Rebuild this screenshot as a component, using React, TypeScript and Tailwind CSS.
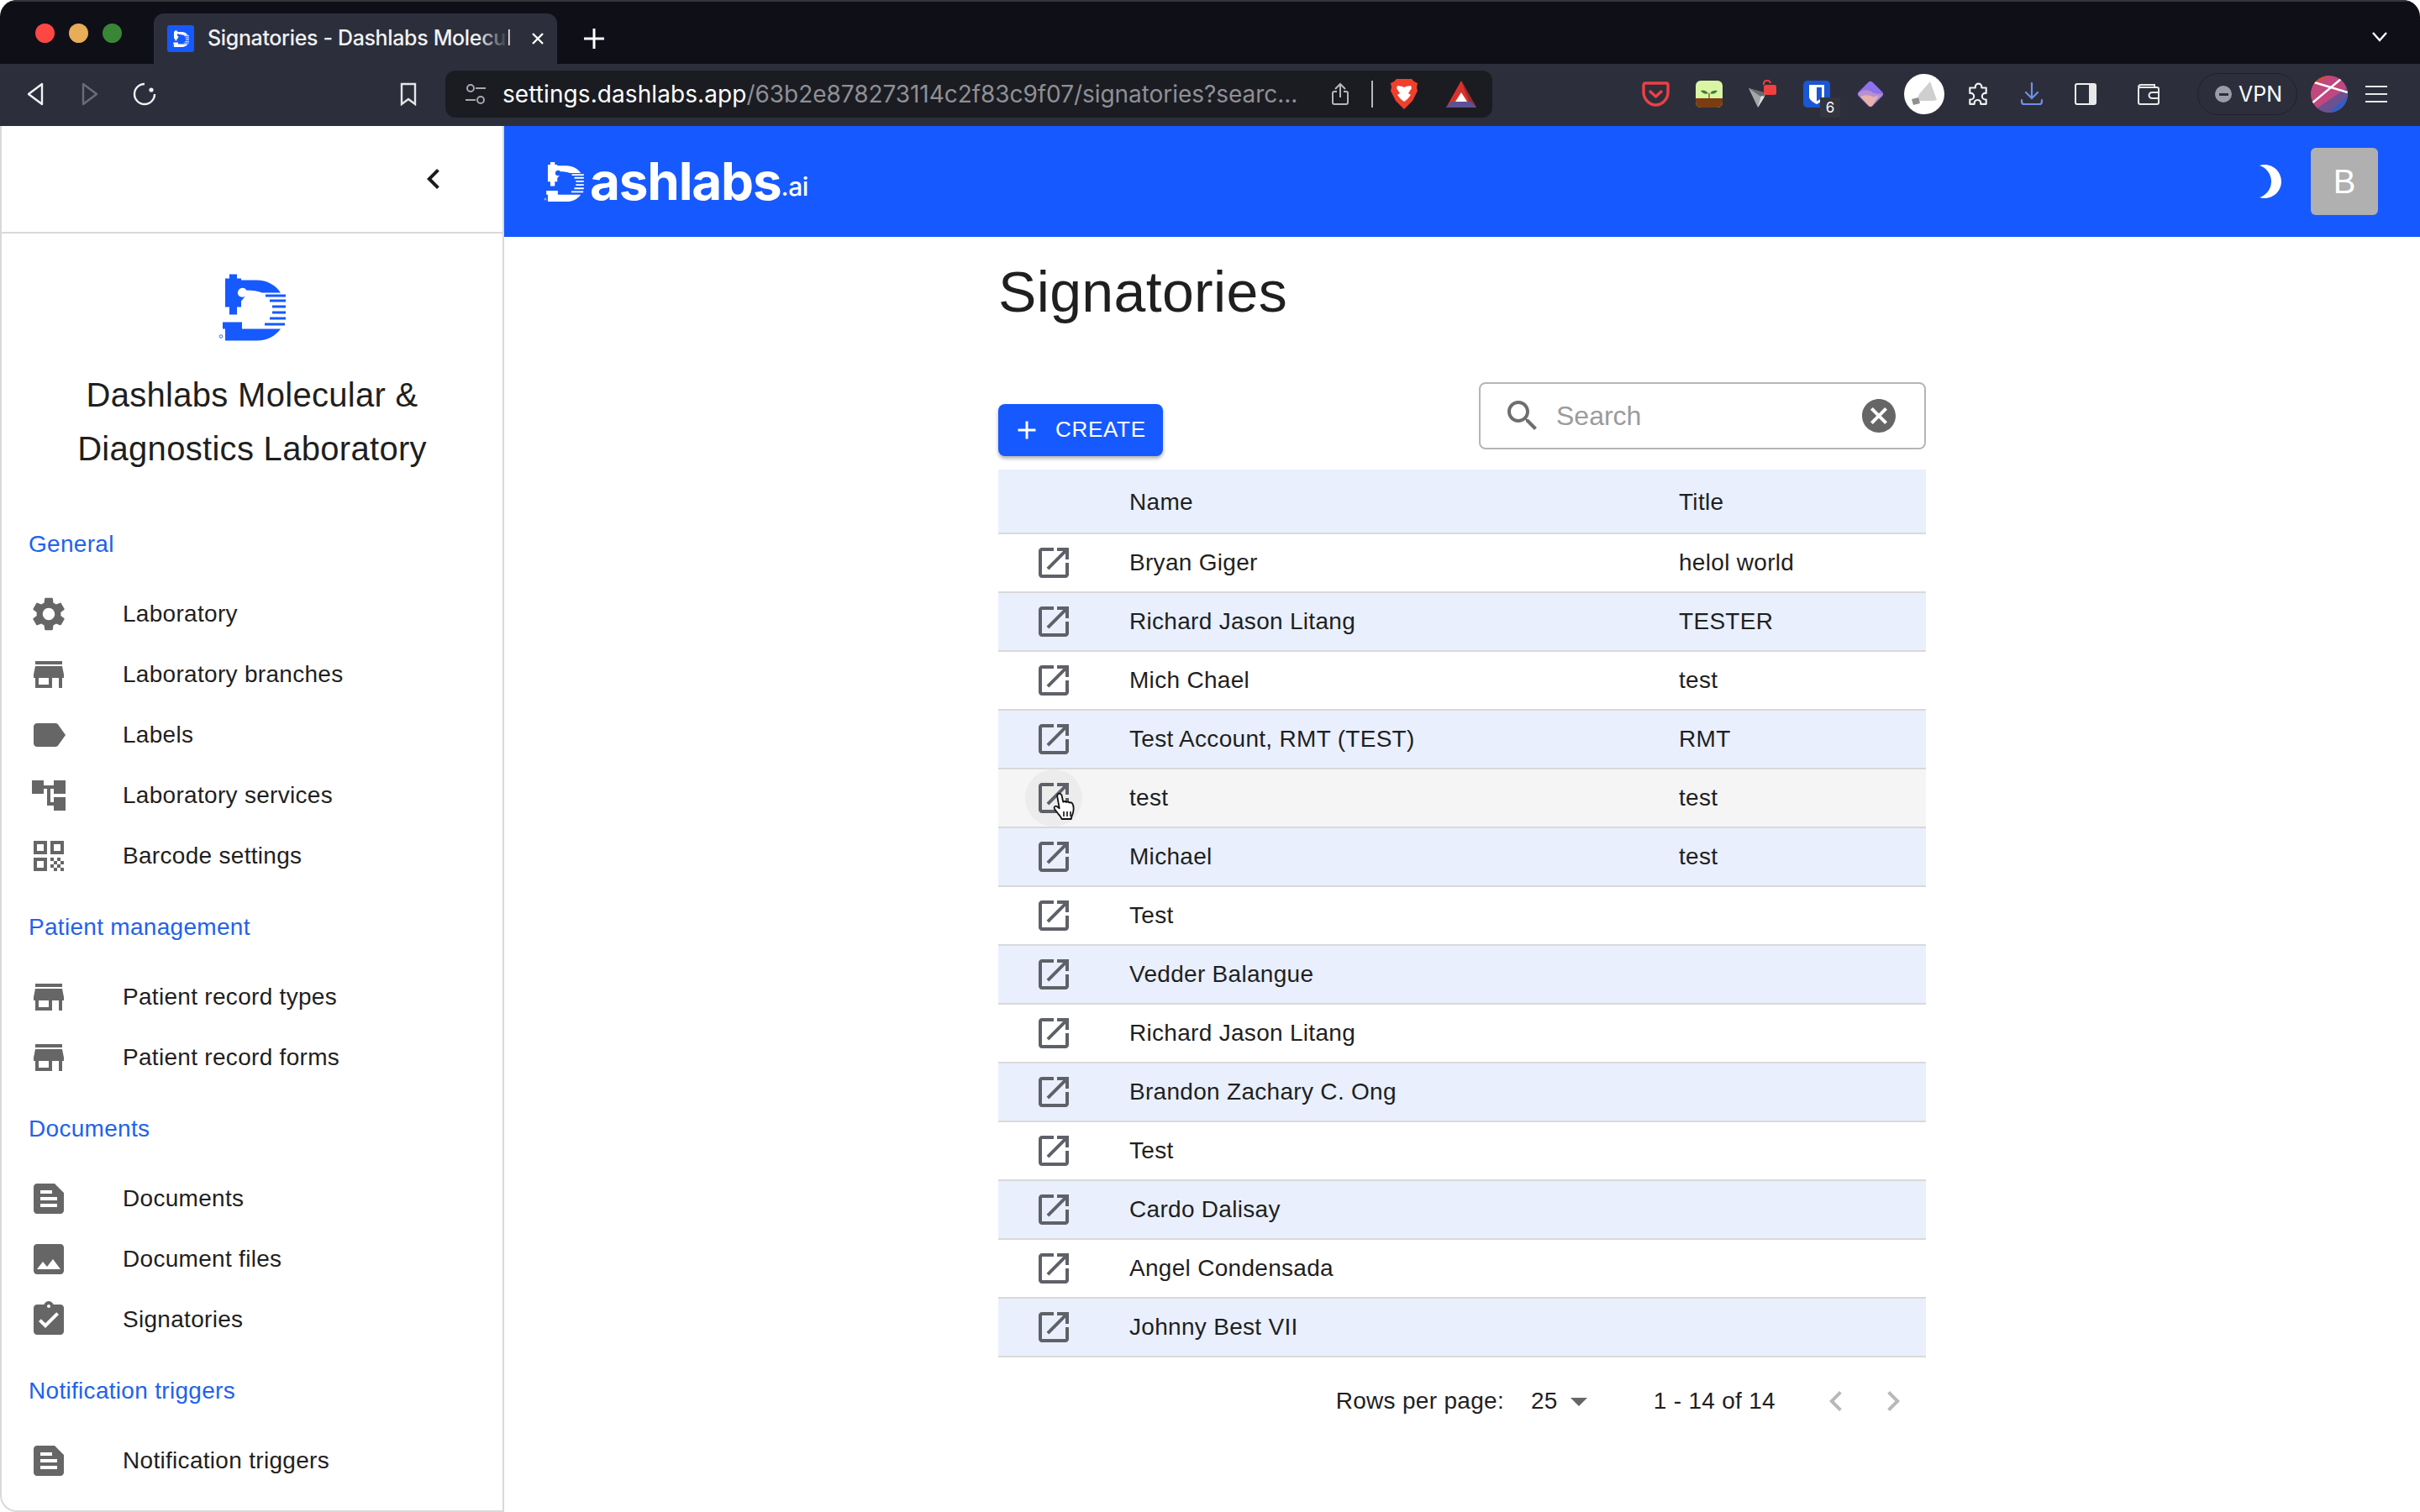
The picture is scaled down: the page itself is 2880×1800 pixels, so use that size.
const sans = 'font-["Liberation_Sans",Arial,sans-serif]';

const signatories = [
  { name: 'Bryan Giger', title: 'helol world' },
  { name: 'Richard Jason Litang', title: 'TESTER' },
  { name: 'Mich Chael', title: 'test' },
  { name: 'Test Account, RMT (TEST)', title: 'RMT' },
  { name: 'test', title: 'test' },
  { name: 'Michael', title: 'test' },
  { name: 'Test', title: '' },
  { name: 'Vedder Balangue', title: '' },
  { name: 'Richard Jason Litang', title: '' },
  { name: 'Brandon Zachary C. Ong', title: '' },
  { name: 'Test', title: '' },
  { name: 'Cardo Dalisay', title: '' },
  { name: 'Angel Condensada', title: '' },
  { name: 'Johnny Best VII', title: '' },
];

const paths = {
  settings:
    'M19.14 12.94c.04-.3.06-.61.06-.94 0-.32-.02-.64-.07-.94l2.03-1.58c.18-.14.23-.41.12-.61l-1.92-3.32c-.12-.22-.37-.29-.59-.22l-2.39.96c-.5-.38-1.03-.7-1.62-.94l-.36-2.54c-.04-.24-.24-.41-.48-.41h-3.84c-.24 0-.43.17-.47.41l-.36 2.54c-.59.24-1.13.57-1.62.94l-2.39-.96c-.22-.08-.47 0-.59.22L2.74 8.87c-.12.21-.08.47.12.61l2.03 1.58c-.05.3-.09.63-.09.94s.02.64.07.94l-2.03 1.58c-.18.14-.23.41-.12.61l1.92 3.32c.12.22.37.29.59.22l2.39-.96c.5.38 1.03.7 1.62.94l.36 2.54c.05.24.24.41.48.41h3.84c.24 0 .44-.17.47-.41l.36-2.54c.59-.24 1.13-.56 1.62-.94l2.39.96c.22.08.47 0 .59-.22l1.92-3.32c.12-.22.07-.47-.12-.61l-2.01-1.58zM12 15.6c-1.98 0-3.6-1.62-3.6-3.6s1.62-3.6 3.6-3.6 3.6 1.62 3.6 3.6-1.62 3.6-3.6 3.6z',
  store: 'M20 4H4v2h16V4zm1 10v-2l-1-5H4l-1 5v2h1v6h10v-6h4v6h2v-6h1zm-9 4H6v-4h6v4z',
  label:
    'M17.63 5.84C17.27 5.33 16.67 5 16 5L5 5.01C3.9 5.01 3 5.9 3 7v10c0 1.1.9 1.99 2 1.99L16 19c.67 0 1.27-.33 1.63-.84L22 12l-4.37-6.16z',
  tree: 'M22 11V3h-7v3H9V3H2v8h7V8h2v10h4v3h7v-8h-7v3h-2V8h2v3z',
  qr: 'M3 11h8V3H3v8zm2-6h4v4H5V5zM3 21h8v-8H3v8zm2-6h4v4H5v-4zM13 3v8h8V3h-8zm6 6h-4V5h4v4zM19 19h2v2h-2zM13 13h2v2h-2zM15 15h2v2h-2zM13 17h2v2h-2zM15 19h2v2h-2zM17 17h2v2h-2zM17 13h2v2h-2zM19 15h2v2h-2z',
  doc: 'M5 3h10.5L21 8.5V19c0 1.1-.9 2-2 2H5c-1.1 0-2-.9-2-2V5c0-1.1.9-2 2-2zm2 4v2h7V7H7zm0 4v2h10v-2H7zm0 4v2h10v-2H7z',
  image:
    'M21 19V5c0-1.1-.9-2-2-2H5c-1.1 0-2 .9-2 2v14c0 1.1.9 2 2 2h14c1.1 0 2-.9 2-2zM8.5 13.5l2.5 3.01L14.5 12l4.5 6H5l3.5-4.5z',
  assignment:
    'M19 3h-4.18C14.4 1.84 13.3 1 12 1c-1.3 0-2.4.84-2.82 2H5c-1.1 0-2 .9-2 2v14c0 1.1.9 2 2 2h14c1.1 0 2-.9 2-2V5c0-1.1-.9-2-2-2zm-7 0c.55 0 1 .45 1 1s-.45 1-1 1-1-.45-1-1 .45-1 1-1zm-2 14l-4-4 1.41-1.41L10 14.17l6.59-6.59L18 9l-8 8z',
  search:
    'M15.5 14h-.79l-.28-.27C15.41 12.59 16 11.11 16 9.5 16 5.91 13.09 3 9.5 3S3 5.91 3 9.5 5.91 16 9.5 16c1.61 0 3.09-.59 4.23-1.57l.27.28v.79l5 4.99L20.49 19l-4.99-5zm-6 0C7.01 14 5 11.99 5 9.5S7.01 5 9.5 5 14 7.01 14 9.5 11.99 14 9.5 14z',
  cancel:
    'M12 2C6.47 2 2 6.47 2 12s4.47 10 10 10 10-4.47 10-10S17.53 2 12 2zm5 13.59L15.59 17 12 13.41 8.41 17 7 15.59 10.59 12 7 8.41 8.41 7 12 10.59 15.59 7 17 8.41 13.41 12 17 15.59z',
  openNew:
    'M19 19H5V5h7V3H5c-1.11 0-2 .9-2 2v14c0 1.1.89 2 2 2h14c1.1 0 2-.9 2-2v-7h-2v7zM14 3v2h3.59l-9.83 9.83 1.41 1.41L19 6.41V10h2V3h-7z',
  moon: 'M9 2c-1.05 0-2.05.16-3 .46 4.06 1.27 7 5.06 7 9.54 0 4.48-2.94 8.27-7 9.54.95.3 1.95.46 3 .46 5.52 0 10-4.48 10-10S14.52 2 9 2z',
  chevronLeft: 'M15.41 7.41 14 6l-6 6 6 6 1.41-1.41L10.83 12z',
  chevronRight: 'M10 6 8.59 7.41 13.17 12l-4.58 4.59L10 18l6-6z',
  plus: 'M19 13h-6v6h-2v-6H5v-2h6V5h2v6h6v2z',
  caret: 'M7 10l5 5 5-5z',
};

const Mat = ({ d, className }: { d: string; className: string }) => (
  <svg className={className} viewBox="0 0 24 24" fill="currentColor" fillRule="evenodd">
    <path d={d} />
  </svg>
);

const menu = [
  {
    heading: 'General',
    items: [
      { icon: paths.settings, label: 'Laboratory' },
      { icon: paths.store, label: 'Laboratory branches' },
      { icon: paths.label, label: 'Labels' },
      { icon: paths.tree, label: 'Laboratory services' },
      { icon: paths.qr, label: 'Barcode settings' },
    ],
  },
  {
    heading: 'Patient management',
    items: [
      { icon: paths.store, label: 'Patient record types' },
      { icon: paths.store, label: 'Patient record forms' },
    ],
  },
  {
    heading: 'Documents',
    items: [
      { icon: paths.doc, label: 'Documents' },
      { icon: paths.image, label: 'Document files' },
      { icon: paths.assignment, label: 'Signatories' },
    ],
  },
  {
    heading: 'Notification triggers',
    items: [{ icon: paths.doc, label: 'Notification triggers' }],
  },
];

// the D + microscope mark, same drawing for the sidebar (blue) and the top bar (white)
const DashMark = ({ className }: { className: string }) => (
  <svg className={className} viewBox="10 11 80 79" fill="currentColor">
    <path d="M23 11h9v5h5v2h18c13 0 23 6 29 15H62c-5-2-11-3-19-3-1-4-9-4-10 2-1 5 5 8 9 5l-5 6v7h-5v9h-9v-9h-5V16h5z" />
    <path d="M66 35h24v3H66zM71 41h19v3H71zM74 48h16v3H74zM74 55h16v3H74zM71 62h19v3H71zM65 69h24v3H65z" />
    <path d="M15 68h23v8h46c-6 8-15 14-29 14H18V76h-3z" />
    <circle cx="13" cy="85" r="1.800" fill="none" stroke="currentColor" strokeWidth="0.900" />
  </svg>
);

const Toolbutton = ({ children }: { children: React.ReactNode }) => (
  <div className="flex h-[64px] w-[64px] shrink-0 items-center justify-center">{children}</div>
);

const BrowserChrome = () => (
  <div className='font-["Inter",sans-serif] text-white'>
    {/* Tab strip */}
    <div className="flex h-[76px] items-start bg-[#0e0f17] border-t-2 border-[#33343c] pl-[42px] pr-[38px]">
      <div className="mt-[26px] flex gap-[17px]">
        <div className="h-[23px] w-[23px] rounded-full bg-[#fc4745]" />
        <div className="h-[23px] w-[23px] rounded-full bg-[#e8ad58]" />
        <div className="h-[23px] w-[23px] rounded-full bg-[#3a8637]" />
      </div>
      <div className="relative ml-[38px] mt-[14px] flex h-[60px] w-[480px] items-center rounded-t-[12px] bg-[#2c2f3b] pl-[16px]">
        <div className="flex h-[32px] w-[32px] items-center justify-center rounded-[3px] bg-[#1659ff]">
          <DashMark className="h-[20px] w-[20px] text-white" />
        </div>
        <div className="ml-[16px] w-[358px] whitespace-nowrap text-[25px] font-medium tracking-[-0.35px] text-[#f1f1f3]">
          Signatories - Dashlabs Molecul
        </div>
        <div className="absolute left-[386px] top-0 h-full w-[36px] bg-gradient-to-r from-transparent to-[#2c2f3b]" />
        <svg className="ml-[26px] h-[18px] w-[18px]" viewBox="0 0 18 18" stroke="white" strokeWidth="2.4">
          <path d="M3 3l12 12M15 3L3 15" />
        </svg>
      </div>
      <svg className="ml-[32px] mt-[32px] h-[24px] w-[24px]" viewBox="0 0 24 24" stroke="white" strokeWidth="3">
        <path d="M12 0v24M0 12h24" />
      </svg>
      <svg className="ml-auto mt-[36px] h-[12px] w-[20px]" viewBox="0 0 20 12" fill="none" stroke="white" strokeWidth="2.4">
        <path d="M2 1l8 9 8-9" />
      </svg>
    </div>

    {/* Toolbar */}
    <div className="flex h-[74px] items-center bg-[#2c2f3b] pb-[2px] pl-[11px]">
      <Toolbutton>
        <svg className="h-[28px] w-[22px] -translate-x-[1px]" viewBox="0 0 22 28" fill="none" stroke="#f2f2f2" strokeWidth="2.4" strokeLinejoin="round">
          <path d="M19 2v24L3 14z" />
        </svg>
      </Toolbutton>
      <Toolbutton>
        <svg className="h-[28px] w-[22px]" viewBox="0 0 22 28" fill="none" stroke="#6a6c76" strokeWidth="2.4" strokeLinejoin="round">
          <path d="M3 2v24l16-12z" />
        </svg>
      </Toolbutton>
      <div className="ml-[1px]">
        <Toolbutton>
          <svg className="h-[28px] w-[28px]" viewBox="0 0 28 28" fill="none" stroke="#f2f2f2" strokeWidth="2.4">
            <path d="M14 2a12 12 0 1 0 12 12" />
            <circle cx="22" cy="9" r="2.6" fill="#f2f2f2" stroke="none" />
          </svg>
        </Toolbutton>
      </div>
      <div className="ml-[250px]">
        <Toolbutton>
          <svg className="h-[28px] w-[20px]" viewBox="0 0 20 28" fill="none" stroke="#e6e6e6" strokeWidth="2.4">
            <path d="M2 2h16v24l-8-6-8 6z" />
          </svg>
        </Toolbutton>
      </div>
      <div className="ml-[12px] flex h-[56px] w-[1246px] items-center rounded-[12px] bg-[#1b1c22]">
        <svg className="ml-[24px] h-[26px] w-[24px]" viewBox="0 0 24 26" fill="none" stroke="#a6a8ae" strokeWidth="2">
          <circle cx="6" cy="6" r="4" />
          <path d="M12 6h12M0 20h12" />
          <circle cx="18" cy="20" r="4" />
        </svg>
        <div className="ml-[20px] w-[950px] whitespace-nowrap text-[28px] tracking-[0.08px]">
          settings.dashlabs.app<span className="tracking-[-0.05px] text-[#8e9096]">/63b2e878273114c2f83c9f07/signatories?searc...</span>
        </div>
        <svg className="ml-[36px] h-[28px] w-[22px]" viewBox="0 0 22 28" fill="none" stroke="#b6b7bb" strokeWidth="2">
          <path d="M11 18V2M5 8l6-6 6 6M7 11H4a2 2 0 0 0-2 2v11a2 2 0 0 0 2 2h14a2 2 0 0 0 2-2V13a2 2 0 0 0-2-2h-3" />
        </svg>
        <div className="ml-[26px] h-[32px] w-[2px] bg-[#b6b7bb]" />
        <svg className="ml-[21px] h-[36px] w-[32px]" viewBox="0 0 32 36">
          <path d="M7 0h18l3 3 4 2-1 5 1 4-6 12-7 7-3 3-3-3-7-7-6-12 1-4-1-5 4-2z" fill="#f0402b" />
          <path d="M8 8l6 1 2 1 2-1 6-1 1 3-4 6 3 2-4 5-4 3-4-3-4-5 3-2-4-6z" fill="#fff" />
        </svg>
        <svg className="ml-[34px] h-[32px] w-[36px]" viewBox="0 0 36 32">
          <path d="M18 0l18 32H0z" fill="#d9322e" />
          <path d="M18 0l18 32-8-5z" fill="#9c2a2a" />
          <path d="M18 14l7 11H11z" fill="#fff" />
          <path d="M0 32l6-7h24l6 7z" fill="#5a5295" />
        </svg>
      </div>
      <div className="ml-[162px] flex items-center">
        <Toolbutton>
          <svg className="h-[30px] w-[33px]" viewBox="0 0 33 30" fill="none" stroke="#ee4045" strokeWidth="3.4" strokeLinecap="round" strokeLinejoin="round">
            <path d="M4 2h25a2 2 0 0 1 2 2v9c0 8-7 15-14.500 15S2 21 2 13V4a2 2 0 0 1 2-2z" />
            <path d="M10 12l6.500 6 6.500-6" />
          </svg>
        </Toolbutton>
        <Toolbutton>
          <svg className="h-[32px] w-[32px]" viewBox="0 0 32 32">
            <rect width="32" height="32" rx="6" fill="#d9f5a3" />
            <path d="M0 21h32v5a6 6 0 0 1-6 6H6a6 6 0 0 1-6-6z" fill="#7a3d12" />
            <path d="M15 15c-3-4-7-4-9-3 2 3 6 5 9 3zM17 15c2-3 5-4 9-3-2 3-5 5-9 3z" fill="#3f7d3a" />
            <path d="M15.300 15h1.400v6h-1.400z" fill="#8a5a22" />
          </svg>
        </Toolbutton>
        <Toolbutton>
          <svg className="h-[34px] w-[34px]" viewBox="0 0 34 34">
            <path d="M0 10l21 6-10 17z" fill="#a5a6ac" />
            <path d="M0 10l21 6-5 5z" fill="#6a6b72" />
            <path d="M11 33l4-14 4 1z" fill="#e2e2e6" />
            <path d="M18 6a4 4 0 0 1 8-2" fill="none" stroke="#f04040" strokeWidth="2" />
            <rect x="18" y="6" width="15" height="12" rx="2.500" fill="#f04040" />
          </svg>
        </Toolbutton>
        <Toolbutton>
          <div className="relative h-[32px] w-[32px] rounded-[5px] bg-[#1a56d6]">
            <svg className="h-[32px] w-[32px]" viewBox="0 0 32 32">
              <path d="M7 5h18v14c0 4-5 7-9 9-4-2-9-5-9-9z" fill="#fff" />
              <path d="M16 8h6v11c0 2-3 4-6 5.500z" fill="#1a56d6" />
            </svg>
            <div className="absolute left-[20px] top-[20px] flex h-[24px] w-[24px] items-center justify-center bg-[#33353f] text-[17px] leading-none">
              6
            </div>
          </div>
        </Toolbutton>
        <Toolbutton>
          <svg className="h-[34px] w-[34px]" viewBox="0 0 32 32">
            <rect x="5" y="5" width="22" height="22" rx="3.500" transform="rotate(45 16 16)" fill="#8d72ee" />
            <path d="M2 16c5-6 12-5 16-2 4 2 8 2 12 2L18 29a3 3 0 0 1-4 0z" fill="#b990cf" />
            <path d="M5 19c4-3 10-2 14 0l6-1-7 11a3 3 0 0 1-4 0z" fill="#e9b1ae" />
          </svg>
        </Toolbutton>
        <Toolbutton>
          <div className="flex h-[48px] w-[48px] items-center justify-center rounded-full bg-white">
            <svg className="h-[34px] w-[34px]" viewBox="0 0 34 34">
              <path d="M24 2l8 22-4 1-20 0 3-8z" fill="#cfcfcf" />
              <path d="M2 23l8-2 2 7-8 2z" fill="#909090" />
            </svg>
          </div>
        </Toolbutton>
        <Toolbutton>
          <svg className="h-[28px] w-[26px]" viewBox="0 0 24 26" fill="none" stroke="#f0f0f0" strokeWidth="2" strokeLinejoin="round">
            <path d="M9 5a3.500 3.500 0 1 1 7 0v1h5v6h-1a3.500 3.500 0 1 0 0 7h1v5h-6v-1a3.500 3.500 0 1 0-7 0v1H3v-5h1a3.500 3.500 0 1 0 0-7H3V6h6z" />
          </svg>
        </Toolbutton>
        <Toolbutton>
          <svg className="h-[28px] w-[26px]" viewBox="0 0 26 28" fill="none" stroke="#6f8fe8" strokeWidth="2.2" strokeLinecap="round">
            <path d="M13 1v17M6 12l7 7 7-7M1 21v2a3 3 0 0 0 3 3h18a3 3 0 0 0 3-3v-2" />
          </svg>
        </Toolbutton>
        <Toolbutton>
          <svg className="h-[26px] w-[26px]" viewBox="0 0 26 26">
            <rect x="1" y="1" width="24" height="24" rx="2" fill="#2c2f3b" stroke="#f0f0f0" strokeWidth="2" />
            <rect x="17" y="1" width="8" height="24" fill="#e8e8e8" />
          </svg>
        </Toolbutton>
        <div className="ml-[11px]">
          <Toolbutton>
            <svg className="h-[26px] w-[26px]" viewBox="0 0 26 26" fill="none" stroke="#e8e8e8" strokeWidth="2">
              <path d="M1 5a3 3 0 0 1 3-3h16v3" />
              <rect x="1" y="5" width="24" height="20" rx="2" />
              <path d="M25 11h-8a3 3 0 0 0 0 7h8" />
            </svg>
          </Toolbutton>
        </div>
        <div className="ml-[26px] flex h-[50px] w-[119px] items-center rounded-full border border-[#1f2029] pl-[20px]">
          <div className="flex h-[20px] w-[20px] items-center justify-center rounded-full bg-[#9c9ca6]">
            <div className="h-[3px] w-[11px] bg-[#2c2f3b]" />
          </div>
          <span className="ml-[8px] text-[25px] leading-none">VPN</span>
        </div>
        <svg className="ml-[16px] h-[44px] w-[44px] rounded-full" viewBox="0 0 44 44">
          <rect width="44" height="44" fill="#c0477f" />
          <path d="M0 44L44 14v30z" fill="#6c5191" />
          <path d="M22 44L44 24v20z" fill="#2f5fc8" />
          <path d="M0 0h22L0 14z" fill="#d9483f" />
          <path d="M0 34L36 4M4 8l40 12" stroke="#fff" strokeWidth="2.4" />
        </svg>
        <svg className="ml-[21px] h-[22px] w-[26px]" viewBox="0 0 26 22" stroke="#e8e8e8" strokeWidth="2">
          <path d="M0 2h26M0 11h26M0 20h26" />
        </svg>
      </div>
    </div>
  </div>
);

const Sidebar = () => (
  <aside className="flex h-full w-[600px] shrink-0 flex-col rounded-bl-[20px] border-x-2 border-b-2 border-[#d9d9d9]">
    <div className="flex h-[128px] shrink-0 items-center justify-end border-b-2 border-[#d9d9d9] pr-[58px]">
      <Mat d={paths.chevronLeft} className="h-[48px] w-[48px] text-[#1c1c1c]" />
    </div>
    <div className="flex flex-col items-center pt-[48px]">
      <DashMark className="h-[80px] w-[80px] text-[#1659ff]" />
      <div className="mt-[32px] w-[480px] text-center text-[40px] leading-[64px] tracking-[0.3px] text-[#1f1f1f]">
        Dashlabs Molecular &amp; Diagnostics Laboratory
      </div>
    </div>
    <nav className="mt-[58px] flex flex-col gap-[25px] pl-[32px] text-[28px] tracking-[0.3px]">
      {menu.map(section => (
        <div key={section.heading}>
          <div className="mb-[23px] h-[48px] leading-[48px] text-[#2162ee]">{section.heading}</div>
          {section.items.map(item => (
            <div key={item.label} className="flex h-[72px] items-center text-[#1f1f1f]">
              <Mat d={item.icon} className="h-[48px] w-[48px] shrink-0 text-[#666666]" />
              <span className="ml-[64px]">{item.label}</span>
            </div>
          ))}
        </div>
      ))}
    </nav>
  </aside>
);

const HandCursor = () => (
  <svg className="absolute left-[33px] top-[27px] h-[36px] w-[30px]" viewBox="0 0 30 36">
    <path
      d="M6 2.500c1.600-1.500 4-.8 4.500 1.200l1.800 8c1.200-.8 2.800-.7 3.600.3 1.200-.6 2.800-.4 3.500.6 1.300-.5 3-.2 3.800 1 1.100 1.700 1.800 6 1 10-.5 3-2 5-2.500 8.400H10.500c-.7-2.400-2.500-4.500-4.500-6.700-1.700-2-3.700-4.300-4.300-6-.6-1.800 1.300-3.300 3-2.300l3 2.200L5.400 6c-.3-1.300-.1-2.500.6-3.500z"
      fill="#fff"
      stroke="#111"
      strokeWidth="1.800"
      strokeLinejoin="round"
    />
    <path d="M13 23v6M17 23v6M21 23v6" stroke="#111" strokeWidth="1.600" />
  </svg>
);

const SignatoryRow = ({ row, index }: { row: { name: string; title: string }; index: number }) => {
  const hovered = index === 4;
  return (
    <div
      className={`grid h-[70px] grid-cols-[156px_654px_1fr] items-center border-b-2 border-[#d9d9d9] text-[28px] tracking-[0.3px] text-[#1f1f1f] ${
        hovered ? 'bg-[#f5f5f5]' : index % 2 === 1 ? 'bg-[#e9effd]' : 'bg-white'
      }`}
    >
      <div className="relative ml-[32px] flex h-[68px] w-[68px] items-center justify-center">
        {hovered && <div className="absolute inset-0 rounded-full bg-[#ececec]" />}
        <Mat d={paths.openNew} className="relative h-[48px] w-[48px] text-[#5f6168]" />
        {hovered && <HandCursor />}
      </div>
      <div>{row.name}</div>
      <div>{row.title}</div>
    </div>
  );
};

const Main = () => (
  <main className="flex min-w-0 flex-1 flex-col">
    <header className="flex h-[132px] shrink-0 items-center bg-[#1659ff] pl-[47px] pr-[50px] text-white">
      <DashMark className="h-[47px] w-[48px]" />
      <span className='ml-[7px] font-["Inter",sans-serif] text-[62px] font-bold leading-none tracking-[-1.2px]'>ashlabs</span>
      <span className='mt-[12px] font-["Inter",sans-serif] text-[30px] font-medium leading-none tracking-[-0.5px]'>.ai</span>
      <Mat d={paths.moon} className="ml-auto h-[48px] w-[48px]" />
      <div className="ml-[25px] flex h-[80px] w-[80px] items-center justify-center rounded-[6px] bg-[#b0b0b0] text-[40px]">B</div>
    </header>

    <div className="mx-auto w-[1104px]">
      <h1 className="mt-[25px] h-[80px] text-[68px] leading-[80px] tracking-[0.35px] text-[#1f1f1f]">Signatories</h1>

      <div className="mt-[68px] flex h-[104px] items-start justify-between">
        <button
          type="button"
          className="mt-[26px] flex h-[62px] w-[196px] items-center rounded-[8px] bg-[#1659ff] pl-[16px] text-[26px] tracking-[0.7px] text-white shadow-[0_3px_4px_rgba(0,0,0,0.3)]"
        >
          <Mat d={paths.plus} className="h-[36px] w-[36px]" />
          <span className="ml-[16px] -translate-y-[1px]">CREATE</span>
        </button>
        <div className="flex h-[80px] w-[532px] items-center rounded-[8px] border-2 border-[#b5b5b5] pl-[26px] pr-[30px]">
          <Mat d={paths.search} className="h-[48px] w-[48px] text-[#6e6e6e]" />
          <span className="ml-[16px] text-[32px] text-[#9b9b9b]">Search</span>
          <Mat d={paths.cancel} className="ml-auto h-[48px] w-[48px] text-[#666666]" />
        </div>
      </div>

      <div className="grid h-[77px] grid-cols-[156px_654px_1fr] items-center border-b-2 border-[#d9d9d9] bg-[#e9effd] pt-[3px] text-[28px] tracking-[0.3px] text-[#1f1f1f]">
        <div />
        <div>Name</div>
        <div>Title</div>
      </div>
      {signatories.map((row, index) => (
        <SignatoryRow key={`${row.name}-${index}`} row={row} index={index} />
      ))}

      <div className="flex h-[104px] items-center justify-end text-[28px] tracking-[0.3px] text-[#1f1f1f]">
        <span>Rows per page:</span>
        <span className="ml-[32px]">25</span>
        <Mat d={paths.caret} className="ml-[1px] h-[48px] w-[48px] text-[#666666]" />
        <span className="ml-[65px]">1 - 14 of 14</span>
        <Mat d={paths.chevronLeft} className="ml-[48px] h-[48px] w-[48px] text-[#b8b8b8]" />
        <Mat d={paths.chevronRight} className="ml-[20px] mr-[15px] h-[48px] w-[48px] text-[#b8b8b8]" />
      </div>
    </div>
  </main>
);

const App = () => {
  return (
    <div className={`h-[1800px] w-[2880px] overflow-hidden bg-white ${sans}`}>
      <div className="h-full overflow-hidden rounded-t-[20px]">
        <BrowserChrome />
        <div className="flex h-[1650px]">
          <Sidebar />
          <Main />
        </div>
      </div>
    </div>
  );
};

export default App;
